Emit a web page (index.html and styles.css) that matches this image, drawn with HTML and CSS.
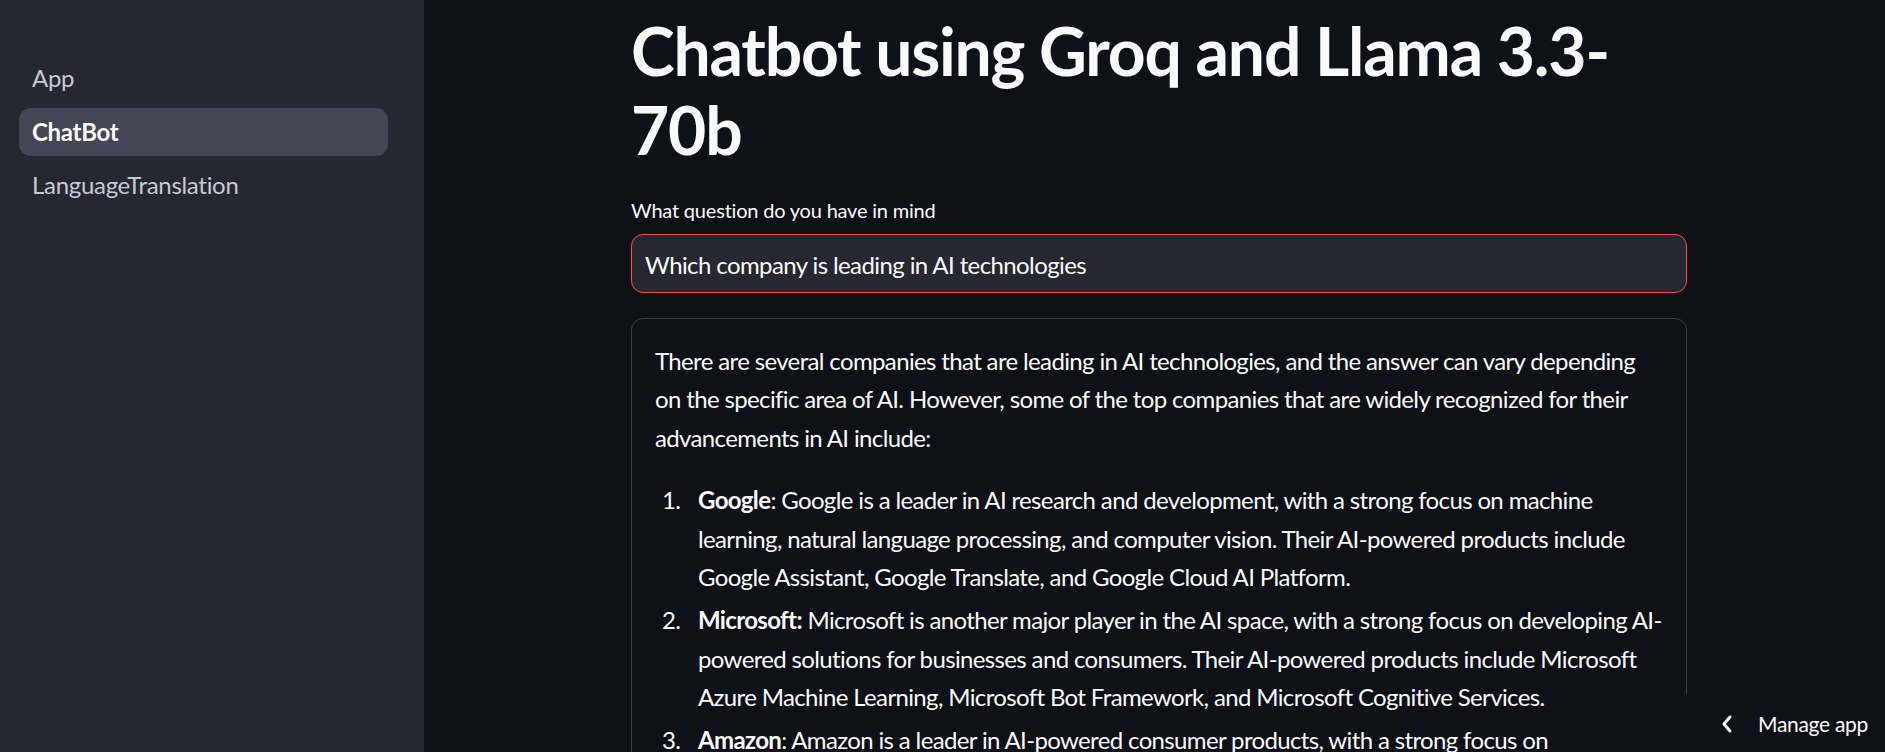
FILE: index.html
```html
<!DOCTYPE html>
<html lang="en">
<head>
<meta charset="utf-8">
<title>ChatBot</title>
<link rel="stylesheet" href="styles.css">
</head>
<body>
<div class="app">
  <aside class="sidebar">
    <nav class="nav">
      <a class="nav-item">App</a>
      <a class="nav-item active">ChatBot</a>
      <a class="nav-item">LanguageTranslation</a>
    </nav>
  </aside>
  <main class="main">
    <div class="block">
      <h1 class="title">Chatbot using Groq and Llama 3.3-70b</h1>
      <label class="label">What question do you have in mind</label>
      <div class="input">Which company is leading in AI technologies</div>
      <div class="answer">
        <p class="para">There are several companies that are leading in AI technologies, and the answer can vary depending on the specific area of AI. However, some of the top companies that are widely recognized for their advancements in AI include:</p>
        <ol class="list">
          <li class="item"><span class="num">1.</span><div class="body"><strong>Google</strong>: Google is a leader in AI research and development, with a strong focus on machine learning, natural language processing, and computer vision. Their AI-powered products include Google Assistant, Google Translate, and Google Cloud AI Platform.</div></li>
          <li class="item"><span class="num">2.</span><div class="body"><strong>Microsoft:</strong> Microsoft is another major player in the AI space, with a strong focus on developing AI-powered solutions for businesses and consumers. Their AI-powered products include Microsoft Azure Machine Learning, Microsoft Bot Framework, and Microsoft Cognitive Services.</div></li>
          <li class="item"><span class="num">3.</span><div class="body"><strong>Amazon</strong>: Amazon is a leader in AI-powered consumer products, with a strong focus on recommendation systems, voice assistants, and cloud computing. Their AI-powered products include Alexa, Amazon SageMaker, and Amazon Rekognition.</div></li>
        </ol>
      </div>
    </div>
  </main>
  <div class="manage">
    <svg class="chev" width="14" height="20" viewBox="0 0 14 20"><path d="M10 3 L4 10 L10 17" fill="none" stroke="#fafafa" stroke-width="3" stroke-linecap="round" stroke-linejoin="round"/></svg>
    <span class="manage-text">Manage app</span>
  </div>
</div>
</body>
</html>
```

FILE: styles.css
```css
* { box-sizing: border-box; }
html, body {
  margin: 0;
  padding: 0;
  height: 752px;
  overflow: hidden;
  background: #0e1117;
  color: #fafafa;
  font-family: "Lato", "Liberation Sans", sans-serif;
}
.app {
  display: flex;
  height: 752px;
  position: relative;
}
.sidebar {
  width: 424px;
  flex-shrink: 0;
  background: #262730;
  padding: 54px 36px 0 19px;
}
.nav {
  display: flex;
  flex-direction: column;
  gap: 5.5px;
}
.nav-item {
  display: block;
  height: 48px;
  line-height: 48px;
  padding: 0 13px;
  border-radius: 12px;
  font-size: 24px;
  color: #c5c9d4;
  letter-spacing: -0.3px;
}
.nav-item.active {
  background: #434654;
  color: #fafafa;
  font-weight: 700;
}
.main {
  flex: 1;
  display: flex;
  justify-content: center;
  padding-left: 9px;
}
.block {
  width: 1056px;
  padding-top: 11px;
}
.title {
  margin: 0;
  font-size: 66px;
  line-height: 79px;
  font-weight: 700;
  letter-spacing: -1.2px;
}
.label {
  display: block;
  margin-top: 23px;
  height: 36px;
  line-height: 36px;
  font-size: 20px;
  letter-spacing: -0.2px;
  margin-bottom: 6px;
}
.input {
  height: 59px;
  border: 1.5px solid #ff4b4b;
  border-radius: 12px;
  background: #262730;
  padding: 4px 13px 0;
  line-height: 52px;
  font-size: 24px;
  letter-spacing: -0.6px;
}
.answer {
  margin-top: 25px;
  border: 1px solid #3c3f46;
  border-radius: 12px;
  padding: 23px 23px;
  font-size: 24px;
  line-height: 38.4px;
  letter-spacing: -0.64px;
}
.para {
  margin: 0 0 24px;
}
.list {
  list-style: none;
  margin: 0;
  padding: 0;
}
.item {
  display: grid;
  grid-template-columns: 43px 1fr;
  margin: 4.8px 0;
}
.num {
  padding-left: 7px;
}
.body strong {
  font-weight: 700;
}
.manage {
  position: absolute;
  right: 0;
  bottom: 0;
  width: 205px;
  height: 58px;
  background: #0e1117;
  display: flex;
  align-items: center;
  padding-left: 40px;
  gap: 24px;
}
.chev { flex-shrink: 0; margin-top: 2px; }
.manage-text {
  font-size: 21px;
  letter-spacing: -0.3px;
  color: #fafafa;
}
```
